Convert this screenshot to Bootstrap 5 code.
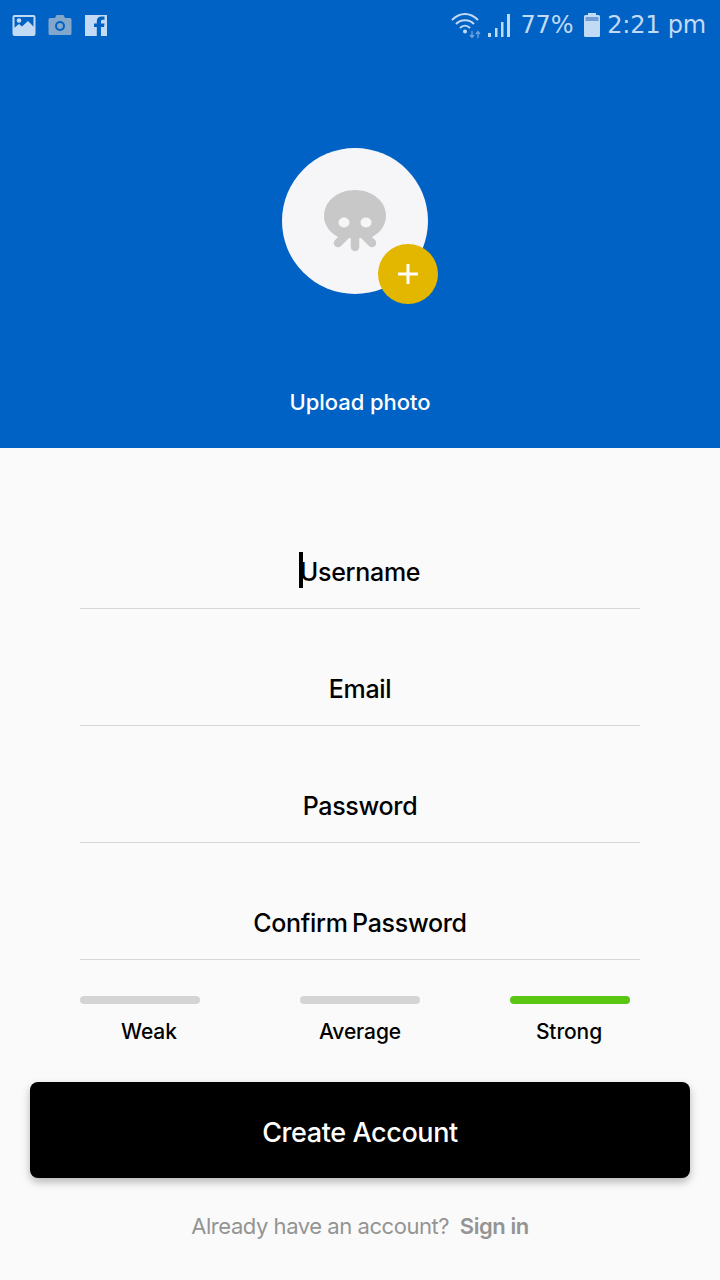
<!DOCTYPE html>
<html lang="en">
<head>
    <meta charset="UTF-8">
    <meta name="viewport" content="width=device-width, initial-scale=1.0">
    <title>Create Account</title>
    <link href="https://cdn.jsdelivr.net/npm/bootstrap@5.3.0/dist/css/bootstrap.min.css" rel="stylesheet">
    <style>
        body { background: #fafafa; font-family: Inter, "Liberation Sans", sans-serif; width: 720px; height: 1280px; overflow: hidden; }
        .hero { background: #0062c4; height: 448px; }
        .status-row { height: 50px; padding: 0 14px 0 12px; color: #c3daf4; }
        .status-text { font-family: "DejaVu Sans", sans-serif; font-size: 24px; line-height: 50px; letter-spacing: -0.2px; }
        .battery-icon { margin: 0 6px 0 10px; }
        .avatar-wrap { width: 146px; height: 146px; margin: 98px 0 0 282px; position: relative; }
        .avatar-disc { width: 146px; height: 146px; background: #f6f6f8; }
        .add-btn { position: absolute; left: 96px; top: 96px; width: 60px; height: 60px; background: #e3b600; }
        .upload-label { color: #fff; font-size: 22px; font-weight: 500; line-height: 28px; margin-top: 94px; letter-spacing: -0.05px; }
        .form-area { padding: 44px 80px 0; }
        .field-wrap { position: relative; height: 117px; padding-top: 47px; }
        .field-input.form-control { height: 70px; border: 0; border-bottom: 1px solid #d6d6d6; border-radius: 0; background: transparent; text-align: center; font-size: 25px; font-weight: 500; letter-spacing: -0.3px; word-spacing: -2px; padding: 0 0 4px; box-shadow: none; }
        .field-input::placeholder { color: #000; opacity: 1; }
        .text-caret { position: absolute; left: 219px; top: 60px; width: 4px; height: 36px; background: #000; }
        .strength-row { margin-top: 36px; }
        .strength-item { width: 120px; font-size: 21px; font-weight: 500; color: #000; letter-spacing: -0.1px; }
        .strength-bar { height: 8px; border-radius: 4px; background: #d4d4d4; margin-bottom: 12px; }
        .strength-bar.is-on { background: #5ac513; }
        .weak-label { margin-left: 41px; }
        .mid-item { margin-left: 100px; margin-right: 90px; }
        .strong-label { margin-left: -2px; }
        .create-btn.btn { display: block; width: 660px; height: 96px; margin: 34px auto 0; padding: 8px 0 0; background: #000; color: #fff; border: 0; border-radius: 8px; font-size: 27px; font-weight: 500; letter-spacing: -0.4px; box-shadow: 0 4px 8px rgba(0,0,0,.28); }
        .signin-line { margin-top: 34px; color: #949494; font-size: 22px; line-height: 28px; letter-spacing: -0.45px; }
        .signin-line a { color: #949494; font-weight: 600; text-decoration: none; margin-left: 5px; }
    </style>
</head>
<body class="m-0">

    <div class="hero">
        <div class="status-row d-flex justify-content-between align-items-center">
            <div class="d-flex align-items-center gap-2 status-icons">
                <!-- picture -->
                <svg width="24" height="24" viewBox="0 0 24 24" class="me-1"><rect x="0.5" y="2" width="23" height="21" rx="2" fill="#c3daf4"/><rect x="2.5" y="4" width="19" height="13" fill="#0062c4"/><circle cx="7" cy="7.5" r="2.3" fill="#c3daf4"/><path d="M2 19 L2 15 L7 11 L10 13.5 L16 8 L22 14 L22 19 Z" fill="#c3daf4"/></svg>
                <!-- camera -->
                <svg width="24" height="24" viewBox="0 0 24 24" class="me-1"><path d="M2 5 H7 L8.500 2 H15.500 L17 5 H22 A1.500 1.500 0 0 1 23.500 6.500 V20.500 A1.500 1.500 0 0 1 22 22 H2 A1.500 1.500 0 0 1 .5 20.500 V6.500 A1.500 1.500 0 0 1 2 5 Z" fill="#82a7cb"/><circle cx="12" cy="13" r="5" fill="#0062c4"/><circle cx="12" cy="13" r="3" fill="#82a7cb"/></svg>
                <!-- facebook -->
                <svg width="24" height="24" viewBox="0 0 24 24"><path d="M1 2 H23 V23 H17 V14 H20 L20.500 10.500 H17 V8.500 C17 7.300 17.600 6.800 18.800 6.800 H20.500 V3.500 H17.500 C14.500 3.500 12.800 5.300 12.800 8.200 V10.500 H10 V14 H12.800 V23 H1 Z" fill="#c3daf4"/></svg>
            </div>
            <div class="d-flex align-items-center">
                <!-- wifi -->
                <svg width="36" height="28" viewBox="0 0 36 28"><g fill="none" stroke="#c3daf4" stroke-width="2"><path d="M1 9 C9 1 19 1 27 9"/><path d="M5 13 C10 8 18 8 23 13"/><path d="M9 17 C12 14 16 14 19 17"/></g><circle cx="14" cy="20.500" r="2" fill="#c3daf4"/><path d="M21 20 V26 M19 24 L21 26.500 L23 24 M27 27 V21 M25 23 L27 20.500 L29 23" fill="none" stroke="#6ea3dc" stroke-width="1.300"/></svg>
                <!-- signal -->
                <svg width="26" height="26" viewBox="0 0 26 26" class="me-2"><g fill="#c3daf4"><rect x="1" y="21" width="3" height="4"/><rect x="8" y="16" width="2.500" height="9"/><rect x="14" y="10" width="2.500" height="15"/><rect x="20" y="2" width="3" height="23"/></g></svg>
                <span class="status-text">77%</span>
                <!-- battery -->
                <svg width="18" height="26" viewBox="0 0 18 26" class="battery-icon"><rect x="5" y="1" width="8" height="3" fill="#c3daf4"/><rect x="1" y="3" width="16" height="22" rx="1.500" fill="#c3daf4"/><rect x="2.500" y="5" width="13" height="4" fill="#6f9fd6"/></svg>
                <span class="status-text">2:21 pm</span>
            </div>
        </div>

        <div class="avatar-wrap">
            <div class="avatar-disc rounded-circle d-flex align-items-center justify-content-center">
                <!-- skull -->
                <svg width="64" height="64" viewBox="0 0 64 64"><path d="M32 1 C49 1 63 12 63 27 C63 37 56 45 47 49 H17 C8 45 1 37 1 27 C1 12 15 1 32 1 Z" fill="#c8c8c8"/><ellipse cx="21" cy="33.500" rx="5.500" ry="5" fill="#f6f6f8"/><ellipse cx="43" cy="33.500" rx="5.500" ry="5" fill="#f6f6f8"/><g stroke="#c8c8c8" stroke-width="8.500" stroke-linecap="round" fill="none"><path d="M22 47 L15 54"/><path d="M32 47 V58"/><path d="M42 47 L49 54"/></g></svg>
            </div>
            <div class="add-btn rounded-circle d-flex align-items-center justify-content-center">
                <svg width="20" height="20" viewBox="0 0 20 20"><path d="M10 1 V19 M1 10 H19" stroke="#fff" stroke-width="3" stroke-linecap="round"/></svg>
            </div>
        </div>
        <div class="upload-label text-center">Upload photo</div>
    </div>

    <form class="form-area">
        <div class="field-wrap">
            <input class="form-control field-input" type="text" placeholder="Username">
            <span class="text-caret"></span>
        </div>
        <div class="field-wrap">
            <input class="form-control field-input" type="email" placeholder="Email">
        </div>
        <div class="field-wrap">
            <input class="form-control field-input" type="password" placeholder="Password">
        </div>
        <div class="field-wrap">
            <input class="form-control field-input" type="password" placeholder="Confirm Password">
        </div>

        <div class="strength-row d-flex">
            <div class="strength-item">
                <div class="strength-bar"></div>
                <div class="weak-label text-nowrap">Weak</div>
            </div>
            <div class="strength-item mid-item">
                <div class="strength-bar"></div>
                <div class="text-center">Average</div>
            </div>
            <div class="strength-item">
                <div class="strength-bar is-on"></div>
                <div class="text-center strong-label">Strong</div>
            </div>
        </div>
    </form>

    <button class="btn create-btn" type="button">Create Account</button>
    <div class="signin-line text-center">Already have an account? <a href="#">Sign in</a></div>

    <script src="https://cdn.jsdelivr.net/npm/bootstrap@5.3.0/dist/js/bootstrap.bundle.min.js"></script>
</body>
</html>
